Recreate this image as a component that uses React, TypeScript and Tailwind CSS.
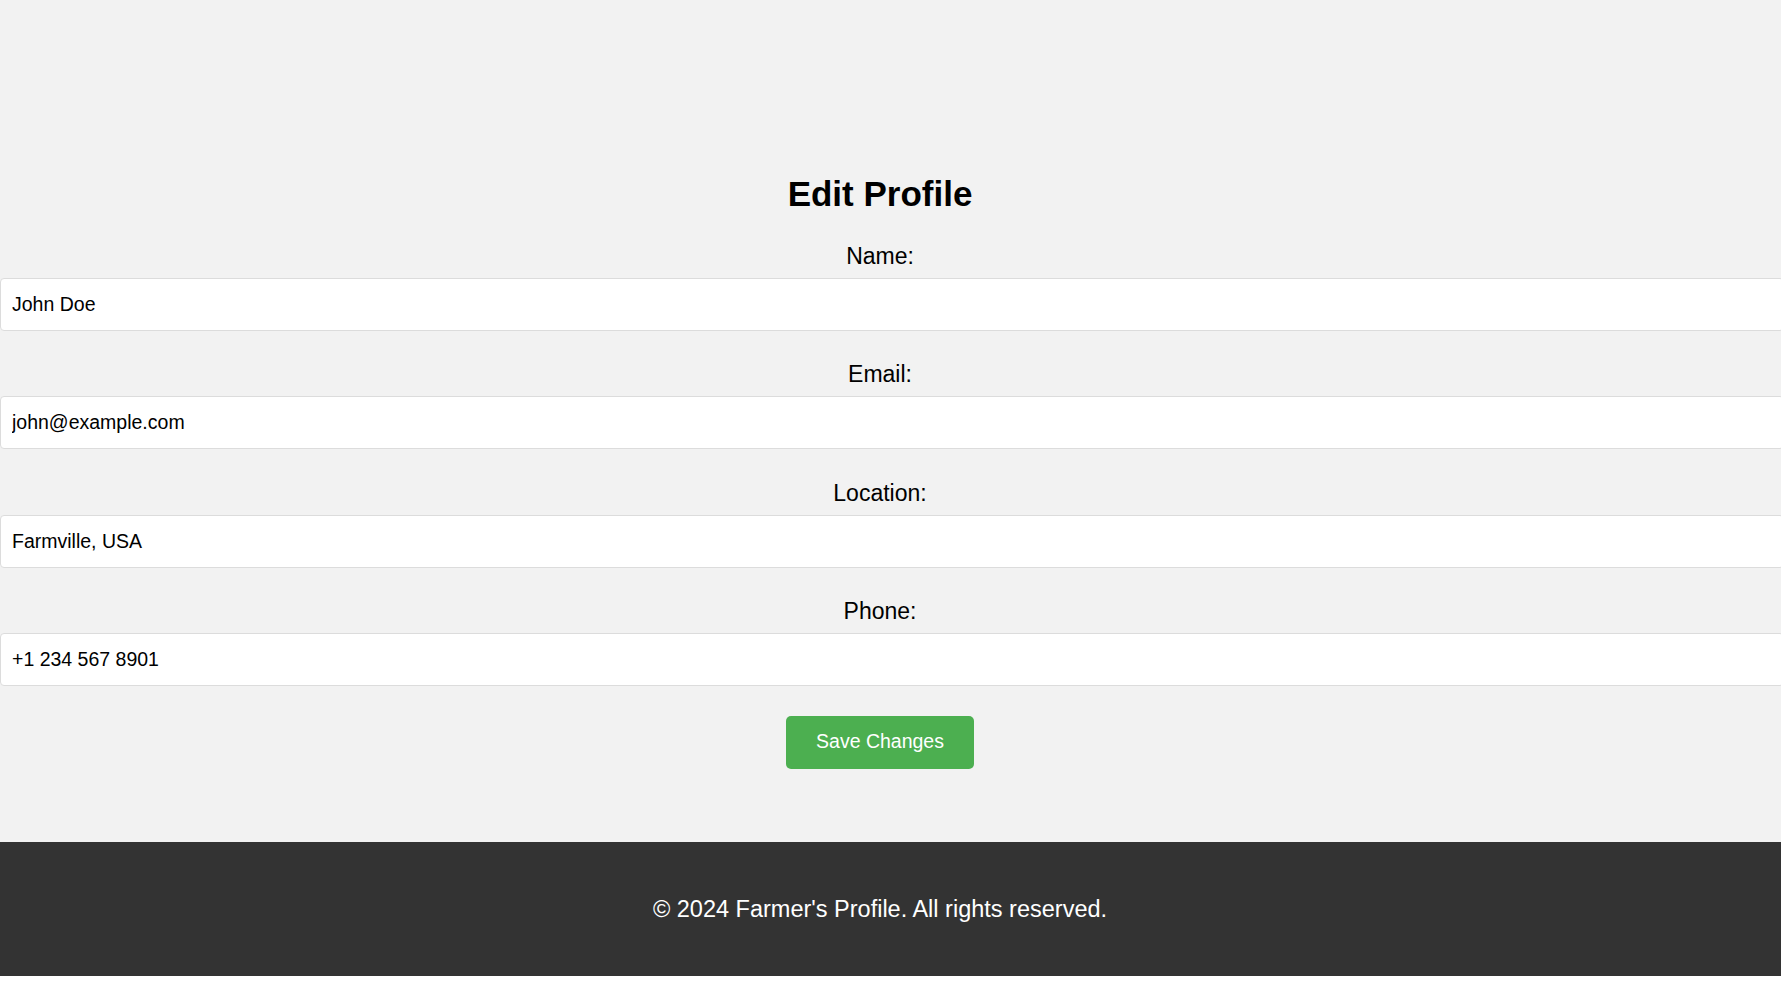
import React, { useState } from 'react';

interface Field {
  id: string;
  label: string;
  value: string;
}

const initialFields: Field[] = [
  { id: 'name', label: 'Name:', value: 'John Doe' },
  { id: 'email', label: 'Email:', value: 'john@example.com' },
  { id: 'location', label: 'Location:', value: 'Farmville, USA' },
  { id: 'phone', label: 'Phone:', value: '+1 234 567 8901' },
];

export default function App() {
  const [fields, setFields] = useState<Field[]>(initialFields);

  const update = (id: string, value: string) =>
    setFields((prev) => prev.map((f) => (f.id === id ? { ...f, value } : f)));

  return (
    <div className="w-full overflow-x-hidden text-black" style={{ fontFamily: '"Liberation Sans", Arial, sans-serif' }}>
      <main className="bg-[#f2f2f2] pt-[174px] pb-[73px]">
        <form className="w-[1760px] flex flex-col items-center" onSubmit={(e) => e.preventDefault()}>
          <h2 className="text-[35px] leading-[40px] font-bold mb-[28.5px]">Edit Profile</h2>

          {fields.map((f, i) => (
            <div key={f.id} className={`w-full flex flex-col items-center ${i > 0 ? 'mt-[30.5px]' : ''}`}>
              <label htmlFor={f.id} className="text-[23px] leading-[26px] mb-[9px]">
                {f.label}
              </label>
              {/* content-box so the input runs past the viewport like the original */}
              <input
                id={f.id}
                value={f.value}
                onChange={(e) => update(f.id, e.target.value)}
                className="self-start box-content w-full h-[51px] px-[11px] bg-white border border-[#dcdcdc] rounded-[4px] text-[19.5px] text-black outline-none"
              />
            </div>
          ))}

          <button
            type="submit"
            className="mt-[29.5px] w-[188px] h-[53px] bg-[#4caf50] text-white text-[19.5px] rounded-[5px]"
          >
            Save Changes
          </button>
        </form>
      </main>

      <footer className="w-full h-[134px] bg-[#333333] flex items-center">
        <p className="w-[1760px] pt-[3px] text-center text-white text-[23.5px]">© 2024 Farmer's Profile. All rights reserved.</p>
      </footer>
    </div>
  );
}
